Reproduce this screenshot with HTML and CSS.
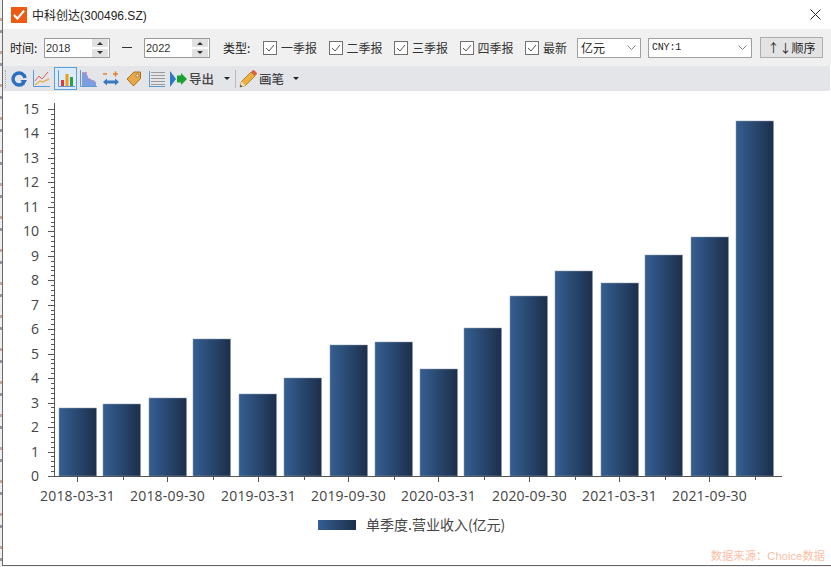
FILE: index.html
```html
<!DOCTYPE html>
<html lang="en">
<head>
  <meta charset="UTF-8" />
  <title>中科创达(300496.SZ)</title>
  <link rel="stylesheet" href="styles.css">
</head>
<body>
  <div class="window">
    <div class="titlebar">
      <svg class="app-icon" width="16" height="16" viewBox="0 0 16 16"><rect width="16" height="16" fill="#ee5a12"/><path d="M3 8l3.400 3.600L13 3.600" fill="none" stroke="#fff" stroke-width="2.200"/></svg>
      <span class="title">中科创达(300496.SZ)</span>
      <svg class="close" width="11" height="11" viewBox="0 0 11 11"><path d="M.5.5l10 10M10.500.5l-10 10" stroke="#222" stroke-width="1" fill="none"/></svg>
    </div>

    <div class="filters">
      <span class="lbl">时间:</span>
      <div class="spin"><span class="spin-val">2018</span><span class="arrows"><i class="up"></i><i class="down"></i></span></div>
      <span class="dash"></span>
      <div class="spin"><span class="spin-val">2022</span><span class="arrows"><i class="up"></i><i class="down"></i></span></div>
      <span class="lbl type-lbl">类型:</span>
      <label class="check"><svg width="14" height="14" viewBox="0 0 14 14"><rect x=".5" y=".5" width="13" height="13" fill="#fff" stroke="#707070"/><path d="M3 7l3 3 5-6" fill="none" stroke="#555"/></svg>一季报</label>
      <label class="check"><svg width="14" height="14" viewBox="0 0 14 14"><rect x=".5" y=".5" width="13" height="13" fill="#fff" stroke="#707070"/><path d="M3 7l3 3 5-6" fill="none" stroke="#555"/></svg>二季报</label>
      <label class="check"><svg width="14" height="14" viewBox="0 0 14 14"><rect x=".5" y=".5" width="13" height="13" fill="#fff" stroke="#707070"/><path d="M3 7l3 3 5-6" fill="none" stroke="#555"/></svg>三季报</label>
      <label class="check"><svg width="14" height="14" viewBox="0 0 14 14"><rect x=".5" y=".5" width="13" height="13" fill="#fff" stroke="#707070"/><path d="M3 7l3 3 5-6" fill="none" stroke="#555"/></svg>四季报</label>
      <label class="check last"><svg width="14" height="14" viewBox="0 0 14 14"><rect x=".5" y=".5" width="13" height="13" fill="#fff" stroke="#707070"/><path d="M3 7l3 3 5-6" fill="none" stroke="#555"/></svg>最新</label>
      <div class="select unit"><span>亿元</span><svg width="9" height="5" viewBox="0 0 9 5"><path d="M.5.5l4 4 4-4" fill="none" stroke="#888"/></svg></div>
      <div class="select currency"><span class="mono">CNY:1</span><svg width="9" height="5" viewBox="0 0 9 5"><path d="M.5.5l4 4 4-4" fill="none" stroke="#888"/></svg></div>
      <button class="sort">↑↓顺序</button>
    </div>

    <div class="tools">
      <span class="grip"></span>
      <svg class="tool t-refresh" width="16" height="16" viewBox="0 0 16 16"><path d="M12.500 12A6 6 0 1 1 14 7" fill="none" stroke="#2a6fc0" stroke-width="3.400"/><path d="M9.500 9h6.500l-3 5z" fill="#2a6fc0"/></svg>
      <svg class="tool t-line" width="18" height="18" viewBox="0 0 18 18"><path d="M1.500 0v16.500H18" fill="none" stroke="#5b9bd5"/><path d="M3 11l4-5 3 3 6-7" fill="none" stroke="#e0605a"/><path d="M3 15l5-4 3 1 6-3" fill="none" stroke="#e8b060" stroke-width="1.500"/></svg>
      <span class="tool-on"><svg width="18" height="18" viewBox="0 0 18 18"><path d="M1.500 0v16.500H18" fill="none" stroke="#5b9bd5"/><rect x="4" y="10" width="3" height="6" fill="#dd3b3b"/><rect x="8.500" y="4" width="3" height="12" fill="#ef9a1e"/><rect x="13" y="7" width="3" height="9" fill="#2aa04a"/></svg></span>
      <svg class="tool t-area" width="18" height="18" viewBox="0 0 18 18"><path d="M1.500 0v16.500H18" fill="none" stroke="#5b9bd5"/><path d="M3 16V3l4-1 2 6 4 2 4 2v4z" fill="#7d9fe0"/><path d="M3 3l4-1 2 6 4 2 4 2" fill="none" stroke="#e87a9a" stroke-dasharray="2 2"/></svg>
      <svg class="tool t-arrows" width="18" height="16" viewBox="0 0 18 16"><path d="M1 3h4" stroke="#e08030" stroke-width="1.500"/><path d="M11 3h5M13.500 .5v5" stroke="#e08030" stroke-width="1.500"/><path d="M3 11h12" stroke="#3a78c0" stroke-width="3"/><path d="M5 7.500L1 11l4 3.500zM13 7.500l4 3.500-4 3.500z" fill="#3a78c0"/></svg>
      <svg class="tool t-tag" width="16" height="16" viewBox="0 0 16 16"><path d="M1 8L8 1h6.500v6.500L7.500 15z" fill="#e8a84a" stroke="#a87020" stroke-linejoin="round"/><circle cx="11.500" cy="4.500" r="1.500" fill="#fff" stroke="#a87020"/></svg>
      <svg class="tool t-list" width="16" height="16" viewBox="0 0 16 16"><path d="M.5 0v16" stroke="#5b9bd5"/><path d="M2 1.500h14M2 4.500h14M2 7.500h14M2 10.500h14M2 13.500h14" stroke="#9a9a9a"/><path d="M0 15.500h16" stroke="#5b9bd5"/></svg>
      <svg class="tool t-export" width="17" height="16" viewBox="0 0 17 16"><path d="M0 0l6 8-6 8z" fill="#2a78c8"/><path d="M7 4.500h4V2l6 6-6 6v-2.500H7z" fill="#18a030"/></svg>
      <span class="tool-text">导出</span>
      <i class="caret c-export"></i>
      <span class="sep"></span>
      <svg class="tool t-pencil" width="18" height="18" viewBox="0 0 18 18"><path d="M1 17l1.500-5.500L12 2l4 4-9.500 9.500z" fill="#eeb03a" stroke="#8a6a20" stroke-width=".7"/><path d="M12 2l1.500-1.500a1.500 1.500 0 0 1 2 0l2 2a1.500 1.500 0 0 1 0 2L16 6z" fill="#d9603a"/><path d="M1 17l1.500-5.500 4 4z" fill="#f3dcb0"/><path d="M1 17l.6-2.200 1.600 1.600z" fill="#333"/></svg>
      <span class="tool-text">画笔</span>
      <i class="caret c-pen"></i>
    </div>

    <div class="chart">
      <svg id="plot" width="826" height="474" viewBox="3 91 826 474"></svg>
    </div>
  </div>
  <script>
    // y pixels of each bar top, read off the chart
    const tops = [408, 404, 398, 339, 394, 378, 345, 342, 369, 328, 296, 271, 283, 255, 237, 121];
    const lefts = [59, 103, 149, 193, 239, 284, 330, 375, 420, 464, 510, 555, 601, 645, 691, 736];
    const dates = ["2018-03-31", "2018-09-30", "2019-03-31", "2019-09-30", "2020-03-31", "2020-09-30", "2021-03-31", "2021-09-30"];
    const base = 476, unit = 24.47;
    let s = '<defs><linearGradient id="bar"><stop offset="0" stop-color="#355f92"/><stop offset="1" stop-color="#1c2f4b"/></linearGradient></defs>';

    tops.forEach((t, i) => {
      s += `<rect class="bar" x="${lefts[i]}" y="${t}" width="37.500" height="${base - t}" fill="url(#bar)"/>`;
    });

    // y axis
    s += `<path class="axis" d="M54.500 103V476.500M48 476.500H782"/>`;
    for (let v = 0; v <= 15; v++) {
      const y = Math.round(base - v * unit) + .5;
      s += `<path class="axis" d="M48 ${y}H54"/>`;
      s += `<text class="tick" x="39" y="${y + 4}" text-anchor="end">${v}</text>`;
      if (v < 15) {
        for (let m = 1; m < 5; m++) {
          const my = Math.round(base - (v + m / 5) * unit) + .5;
          s += `<path class="axis" d="M51 ${my}H54"/>`;
        }
      }
    }

    // x axis
    dates.forEach((d, i) => {
      const x = Math.round(77 + i * 90.3) + .5;
      s += `<path class="axis" d="M${x} 477V482M${Math.round(x + 45.2) + .5} 477V480"/>`;
      s += `<text class="tick date" x="${x}" y="501" text-anchor="middle">${d}</text>`;
    });

    s += `<rect x="318" y="520" width="38" height="10" fill="url(#bar)"/>`;
    s += `<text class="legend" x="366" y="530">单季度.营业收入(亿元)</text>`;
    s += `<text class="source" x="825" y="560" text-anchor="end">数据来源：Choice数据</text>`;
    document.getElementById("plot").innerHTML = s;
  </script>
</body>
</html>
```

FILE: styles.css
```css
html, body {
  margin: 0;
  padding: 0;
  height: 567px;
  overflow: hidden;
}
body {
  background: repeating-linear-gradient(180deg, #efefef 0, #efefef 18px, #c9a79a 18px, #c9a79a 21px, #efefef 21px, #efefef 30px, #8f97a8 30px, #8f97a8 33px);
  font-family: "Noto Sans CJK SC", "Liberation Sans", sans-serif;
  color: #222;
  font-size: 12px;
}
.window {
  margin-left: 2px;
  width: 829px;
  height: 566px;
  background: #fff;
  border-left: 1px solid #6a6a6a;
  border-bottom: 1px solid #6a6a6a;
  box-sizing: border-box;
}
.titlebar {
  height: 29px;
  display: flex;
  align-items: center;
  background: #fff;
}
.app-icon {
  margin-left: 8px;
}
.title {
  margin-left: 5px;
  font-size: 12px;
  font-family: "Liberation Sans", "Noto Sans CJK SC", sans-serif;
  color: #222;
}
.close {
  margin-left: auto;
  margin-right: 10px;
}
.filters {
  height: 37px;
  background: #f0f0f0;
  display: flex;
  align-items: center;
}
.lbl {
  margin-left: 7px;
  width: 34px;
}
.spin {
  width: 66px;
  height: 20px;
  box-sizing: border-box;
  border: 1px solid #9a9a9a;
  background: #fff;
  display: flex;
  justify-content: space-between;
  align-items: center;
  font-family: "Liberation Sans", sans-serif;
  font-size: 11px;
  color: #333;
}
.spin-val {
  margin-left: 1px;
}
.arrows {
  width: 16px;
  height: 18px;
  background: linear-gradient(180deg, #e2e2e2 0, #e2e2e2 8px, #fff 8px, #fff 10px, #e2e2e2 10px);
  display: flex;
  flex-direction: column;
  justify-content: space-around;
  align-items: center;
  margin-right: 1px;
}
.arrows i {
  display: block;
  width: 0;
  height: 0;
  border-left: 3px solid transparent;
  border-right: 3px solid transparent;
}
.up {
  border-bottom: 3px solid #333;
}
.down {
  border-top: 3px solid #333;
}
.dash {
  width: 10px;
  height: 1px;
  background: #333;
  margin: 0 12px;
}
.type-lbl {
  margin-left: 13px;
  width: 40px;
}
.check {
  display: flex;
  align-items: center;
  gap: 4px;
  width: 65.5px;
  color: #333;
}
.check.last {
  width: 52px;
}
.select {
  height: 20px;
  box-sizing: border-box;
  border: 1px solid #a0a0a0;
  background: #fff;
  display: flex;
  align-items: center;
  justify-content: space-between;
  padding: 0 4px 0 3px;
}
.unit {
  width: 64px;
}
.currency {
  width: 104px;
  margin-left: 7px;
}
.mono {
  font-family: "Liberation Mono", monospace;
  font-size: 10px;
  letter-spacing: -.2px;
}
.sort {
  width: 63px;
  height: 21px;
  margin-left: 8px;
  padding: 0;
  border: 1px solid #adadad;
  background: #e3e3e3;
  font-family: inherit;
  font-size: 12px;
  color: #222;
}
.tools {
  height: 25px;
  background: #e3e5e9;
  display: flex;
  align-items: center;
  margin-right: 1px;
}
.grip {
  width: 1px;
  height: 18px;
  margin-left: 2px;
  border-left: 1px dotted #aaa;
}
.tool {
  flex: none;
}
.t-refresh { margin-left: 4px; }
.t-line { margin-left: 5px; }
.tool-on {
  width: 23px;
  height: 23px;
  margin-left: 4px;
  box-sizing: border-box;
  border: 1px solid #5aa0dc;
  background: #dcebf7;
  display: flex;
  align-items: center;
  justify-content: center;
}
.t-area { margin-left: 2px; }
.t-arrows { margin-left: 5px; }
.t-tag { margin-left: 6px; }
.t-list { margin-left: 7px; }
.t-export { margin-left: 5px; }
.tool-text {
  margin-left: 2px;
  font-size: 12.5px;
  font-weight: 500;
  color: #444;
}
.caret {
  width: 0;
  height: 0;
  border-left: 3px solid transparent;
  border-right: 3px solid transparent;
  border-top: 3px solid #222;
}
.c-export { margin-left: 10px; }
.sep {
  width: 1px;
  height: 18px;
  background: #bbb;
  margin-left: 5px;
}
.t-pencil { margin-left: 3px; }
.c-pen { margin-left: 9px; }
.chart {
  line-height: 0;
}
.bar {
  stroke: #8a98aa;
  stroke-width: .5;
}
.axis {
  stroke: #555;
  stroke-width: 1;
  fill: none;
}
.tick {
  font-family: "Open Sans", sans-serif;
  font-size: 14px;
  fill: #444;
}
.date {
  letter-spacing: .2px;
}
.legend {
  font-family: "Noto Sans CJK SC", sans-serif;
  font-size: 14px;
  fill: #444;
}
.source {
  font-family: "Liberation Sans", "Noto Sans CJK SC", sans-serif;
  font-size: 11.3px;
  fill: #fbbfa5;
}
```
